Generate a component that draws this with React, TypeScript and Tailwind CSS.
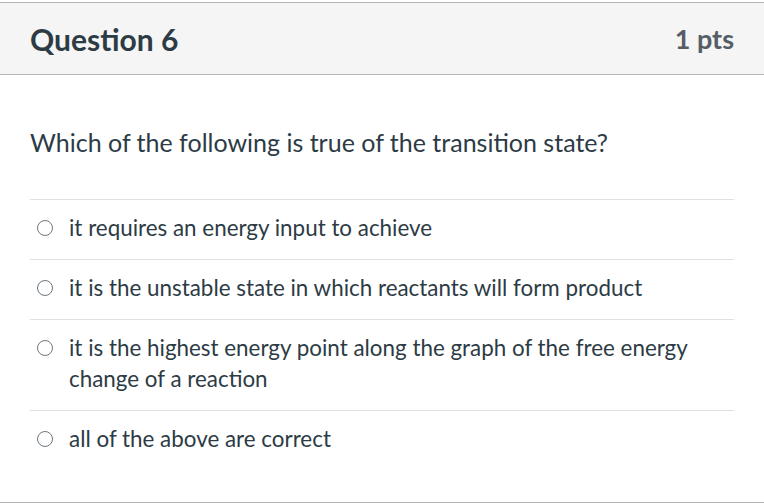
const answers = [
  "it requires an energy input to achieve",
  "it is the unstable state in which reactants will form product",
  "it is the highest energy point along the graph of the free energy change of a reaction",
  "all of the above are correct",
];

export default function App() {
  return (
    <div className="h-[504px] w-[764px] overflow-hidden bg-white pt-[2px]" style={{ fontFamily: "Lato, 'Open Sans', sans-serif" }}>
      <div className="flex h-[501px] flex-col border-y border-[#b5b5b5]">
        {/* header */}
        <div className="flex h-[72px] shrink-0 items-center justify-between border-b border-[#b5b5b5] bg-[#f5f5f5] px-[30px]">
          <h2 className="pt-[1px] text-[30px] font-bold text-[#2d3b45]">Question 6</h2>
          <span className="pt-[1px] text-[27px] font-bold text-[#555e66]">1 pts</span>
        </div>

        <div className="px-[30px]">
          <p className="pt-[51px] pb-[41px] text-[25px] leading-[32px] text-[#2d3b45]">
            Which of the following is true of the transition state?
          </p>

          <div className="border-t border-[#e0e0e0]">
            {answers.map((a, i) => (
              <label
                key={i}
                className="flex gap-[16px] border-b border-[#e0e0e0] pt-[12px] pb-[16px] pl-[7px] pr-[20px] last:border-b-0"
              >
                <span className="mt-[8px] box-border h-[16px] w-[16px] shrink-0 rounded-full border-[1.5px] border-[#6b7780] bg-white" />
                <span className="text-[22.4px] leading-[31px] text-[#2d3b45]">{a}</span>
              </label>
            ))}
          </div>
        </div>
      </div>
    </div>
  );
}
